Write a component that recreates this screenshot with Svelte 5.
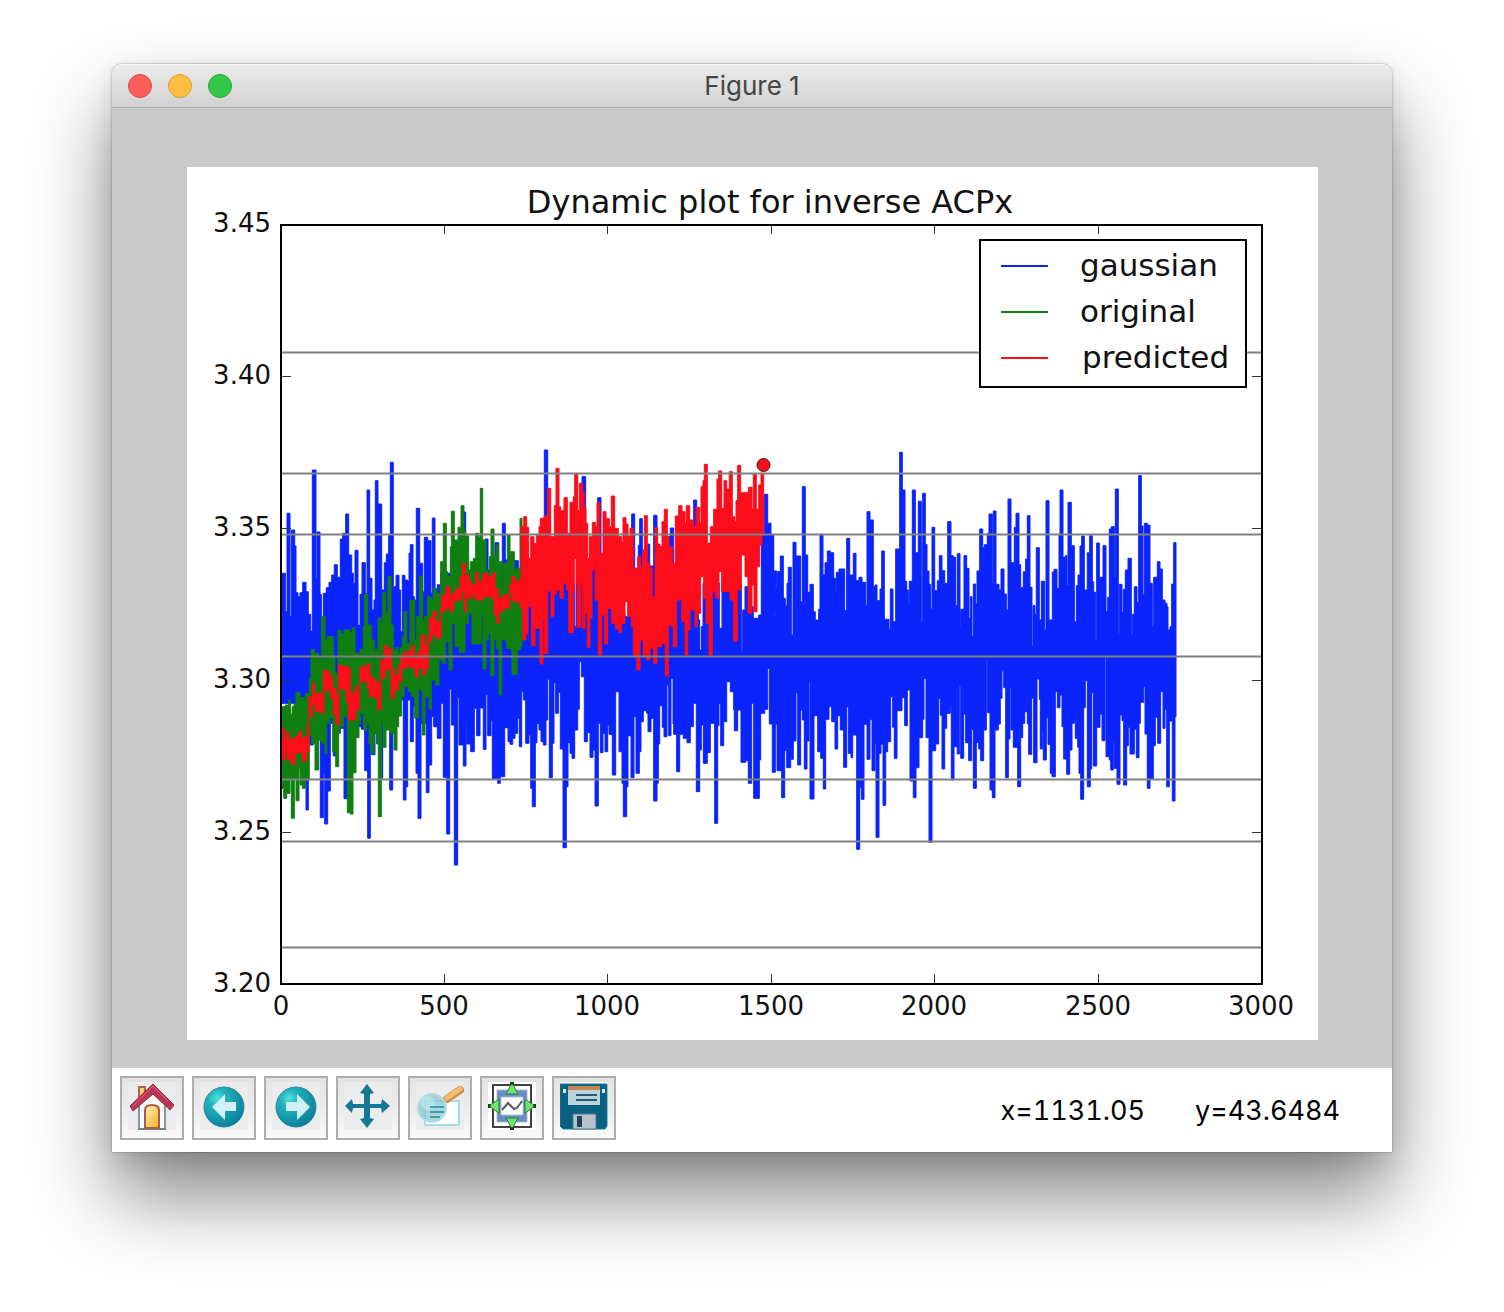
<script>
  const OX = 270;
  const OY = 440;

  // Envelope steps of each trace: "x y" pairs in thirds of a plot unit.
  // Every y holds until the next x; shift moves a section along the axis,
  // and spread widens its band by that many thirds.
  const sections = (...parts) =>
    parts.flatMap(([shift, text, spread = 0]) =>
      text.split(',').map((pair) => {
        const [x, y] = pair.trim().split(' ').map(Number);
        return [OX + (x + shift) / 3, OY + (y + spread) / 3];
      })
    );

  const stepped = (points) => points.map(([x, y]) => `H${x.toFixed(1)}V${y.toFixed(1)}`).join('');

  function area(top, bottom, endX) {
    const end = OX + endX / 3;
    const lower = bottom
      .map(([x, y], i) => {
        const next = i + 1 < bottom.length ? bottom[i + 1][0] : end;
        return `H${next.toFixed(1)}V${y.toFixed(1)}H${x.toFixed(1)}`;
      })
      .reverse()
      .join('');
    return `M${top[0][0]} ${top[0][1]}${stepped(top)}H${end}${lower}Z`;
  }

  const gaussian = area(
    sections(
      [0, '36 400,46 515,51 220,60 530,64 270,74 318,78 458,84 470,90 458,98 427,108 455,115 523,122 573,127 90,138 415,141 276,150 463,154 600,160 460,169 443,177 427,185 405,193 374,202 412,211 297,218 280,227 222,236 345,245 400,250 430,255 331,264 556,270 463,276 368,286 460,291 150,299 415,306 510,312 480,316 122,324 192,335 450,343 368,349 342,356 287,361 67,370 440,378 406,387 450,392 575,397 406,405 420,413 424,417 340,421 314,429 470,433 480,439 205,449 370,458 456,463 292,473 302,483 460,487 234,495 447,502 434,509 480,512 400,580 216,587 400,645 297,654 390,675 308,686 400,697 250,706 360,735 362,745 390'],
      [750, '0 400,73 30,83 450,130 430,163 560,168 430,186 110,197 430,200 480,215 390,233 173,243 350,255 480,263 505,300 305,306 520,315 530,330 400,335 222,344 385,355 316,359 236,367 380,381 312,389 378,401 226,411 440,443 290,451 264,461 400,495 250,500 400,521 180,530 300,535 540,539 630,544 560,549 430,566 310,573 430,598 565,606 430,630 430,664 635,668 510,675 440,688 500,700 535,716 525,724 285,733 163,743 250,751 285,760 520,766 440,770 393'],
      [1500, '0 250,3 285,11 523,17 430,22 395,31 348,40 475,46 498,51 430,55 382,64 585,69 307,78 348,92 485,97 140,106 345,113 457,120 433,130 515,136 540,146 508,150 283,159 405,165 368,172 333,181 338,191 415,197 455,199 397,207 387,224 512,230 295,239 405,250 340,258 422,267 412,276 427,287 497,291 215,300 240,310 440,315 435,321 482,330 447,335 333,343 538,357 568,361 447,369 545,377 327,389 37,397 150,405 424,410 450,415 488,418 424,427 150,436 338,445 184,454 545,458 160,466 313,471 393,477 433,482 507,486 262,494 452,502 422,508 347,516 392,524 430,533 245,543 347,550 352,557 497,562 341,570 560,572 508,582 347,590 385,597 535,601 470,606 590,610 432,617 492,621 393,629 267,638 323,643 314,652 280,657 222,667 430,670 213,678 433,687 450,693 387,702 462,709 510,714 177'],
      [2220, '3 368,13 262,18 220,27 374,32 443,40 395,47 357,52 227,60 442,66 618,69 497,75 523,79 323,88 540,94 424,104 570,108 182,117 540,127 396,132 388,141 445,147 285,150 150,159 352,166 347,171 437,174 187,184 317,193 545,199 437,204 405,210 318,215 288,223 450,232 338,239 287,247 425,251 457,257 603,260 309,268 412,279 317,288 515,293 472,298 267,304 260,313 410,316 147,325 580,328 433,336 517,340 448,346 390,354 355,364 585,367 523,373 440,381 487,386 107,394 258,399 465,403 250,412 255,420 430,427 560,431 412,442 365,450 387,457 480,465 490,471 500,474 570,480 560,485 432,491 308']
    ),
    sections(
      [0, '36 790,104 810,108 1110,115 900,120 915,130 880,151 1133,160 1000,164 1152,173 1053,181 850,190 948,197 870,211 865,222 1076,232 860,274 868,284 992,293 1195,301 900,305 944,315 880,320 912,329 860,335 1015,338 760,350 860,359 1050,368 880,374 780,400 1080,408 1040,413 780,421 905,430 800,438 1000,444 1135,453 850,469 1058,477 975,485 830,491 860,502 895,513 790,520 1012,530 1182,539 747,544 855,553 1275,563 773,567 915,580 978,588 850,590 912,602 935,613 805,620 887,630 804,640 928,648 763,653 887,663 842,667 1018,683 1030,691 1010,704 863,714 905,720 913,728 895,735 880,743 835,748 920'],
      [750, '5 755,10 780,17 910,27 885,32 1045,37 1100,46 908,51 850,57 870,63 905,70 915,78 840,83 718,88 1013,97 910,102 728,107 820,115 757,121 927,129 1223,139 1040,144 908,150 940,156 955,164 870,173 808,178 665,184 710,193 905,202 878,210 952,219 930,225 1098,235 850,241 938,249 880,255 935,263 855,267 883,277 1005,287 755,297 935,306 1030,310 1130,320 1040,324 887,333 1013,342 830,348 1000,358 935,363 845,370 812,380 820,384 875,393 835,401 1083,411 1030,415 912,419 797,427 862,432 890,441 735,446 887,453 715,459 852,461 883,470 995,479 883,490 895,501 908,511 860,520 790,529 1055,539 930,544 855,550 970,562 938,571 850,584 1150,593 857,597 790,602 917,611 845,620 725,631 755,641 810,643 872,653 810,663 967,677 962,685 1030,695 790,701 1075,718 960,722 820,734 808,743 685,748 852,757 997,766 852,771 990'],
      [1500, '21 992,35 1073,44 932,50 983,62 958,70 903,78 758,83 975,92 810,97 840,103 987,111 903,117 725,120 1077,132 827,143 935,152 955,160 1047,167 838,177 800,185 845,195 927,203 827,211 870,221 982,230 800,235 940,243 953,248 885,260 1228,269 1043,274 1078,282 853,291 958,300 838,306 992,315 910,318 1192,327 940,333 912,339 1096,347 935,353 905,362 770,368 862,373 955,381 812,396 773,404 857,412 750,420 1023,430 1073,438 983,447 893,458 838,462 715,468 893,477 1207,486 932,497 912,506 775,511 826,516 987,524 865,530 820,541 795,544 1020,552 920,562 942,568 738,572 955,581 822,587 908,596 962,605 868,610 1045,619 908,626 927,632 962,641 870,649 655,652 818,660 1050,667 1073,675 870,685 852,691 775,696 693,701 743,707 1013,715 897'],
      [2220, '0 742,3 870,10 922,23 1040,32 893,38 850,44 815,52 852,56 943,65 775,71 968,81 717,88 778,91 927,97 880,100 960,109 832,114 913,121 1000,126 1010,136 755,142 803,150 765,156 860,161 957,170 1003,179 930,186 850,193 842,196 895,203 922,207 1000,212 1078,221 803,226 722,232 1040,241 987,245 758,250 978,260 862,270 822,276 902,285 650,288 950,298 960,302 990,310 908,313 985,321 1033,330 825,336 842,341 1035,350 917,355 862,360 942,373 868,379 953,387 850,391 787,401 740,405 882,412 1045,420 1018,430 917,436 832,443 910,452 755,459 865,465 808,470 1040,478 843,487 1083,495 830']
    ),
    2718
  );

  const original = area(
    sections([0, '36 800,46 795,56 780,62 822,67 800,72 793,78 757,90 773,104 805,107 760,118 715,123 628,133 640,145 655,155 530,165 600,172 590,190 650,195 700,204 570,213 582,222 570,240 577,247 563,255 640,270 628,280 560,284 462,293 555,304 600,313 690,316 628,324 535,333 550,338 458,347 520,354 410,363 555,370 630,378 622,384 640,390 622,397 590,402 515,410 610,420 480,434 600,440 530,449 408,458 540,463 530,472 470,483 480,490 445,500 460,512 365,520 250,529 395,533 410,541 320,544 214,553 300,564 262,573 197,582 270,587 288,596 390,601 365,610 355,617 280,627 292,631 145,638 300,648 390,653 400,658 350,663 267,672 350,679 315,686 365,697 435,700 370,712 285,720 335,733 390,738 385,750 235']),
    sections([0, '36 1045,41 1075,50 1060,60 1020,64 1135,73 1015,78 1082,87 985,90 1035,97 1045,106 1020,118 885,125 910,135 990,146 900,151 905,160 912,165 940,170 850,178 835,188 935,197 980,206 880,211 860,220 830,232 1118,241 1122,249 998,258 893,267 850,272 820,281 870,290 850,297 912,303 940,312 880,320 910,325 1130,334 850,340 922,348 870,361 880,372 930,381 860,386 828,395 770,402 740,415 755,424 770,434 835,445 750,457 885,465 770,477 808,484 720,497 735,507 660,518 670,526 605,537 690,546 550,555 620,568 637,585 550,595 520,606 612,628 610,635 520,639 687,648 600,655 580,662 706,672 600,680 625,687 765,695 600,710 625,722 630,726 703,742 630,752 620']),
    756
  );

  const predicted = area(
    sections(
      [0, '36 870,43 903,50 882,57 910,64 900,75 895,85 880,95 900,103 895,112 860,117 775,127 735,134 765,160 695,170 700,180 715,188 750,197 770,205 680,215 685,225 683,233 690,241 765,255 745,262 770,270 685,285 690,290 677,300 715,310 725,320 735,332 665,342 622,352 650,357 630,365 690,372 710,385 680,393 650,403 640,415 640,423 622,432 650,445 640,453 590,463 620,472 595,478 540,487 520,497 550,510 510,515 470,527 445,540 470,550 460,560 450,570 415,577 375,586 410,597 430,605 440,617 403,625 430,638 405,652 415,665 403,675 450,685 480,697 470,718 440,725 415,735 430,745 425', -5],
      [750, '3 260,11 230,20 262,26 355,32 290,42 310,50 285,57 260,61 235,72 228,83 145,92 290,103 197,108 85,117 200,122 212,132 173,142 280,150 187,160 170,164 102,173 212,178 130,188 158,193 205,198 250,203 355,208 290,217 247,226 260,231 187,240 340,249 215,258 236,268 260,274 168,284 265,295 290,305 310,309 233,318 252,324 290,330 265,340 385,353 350,362 380,368 330,373 227,382 370,390 385,397 470,405 263,413 312,420 320,426 245,433 208,442 290,447 320,458 370,466 228,476 197,486 215,495 250,499 197,509 240,520 260,528 202,539 250,543 140,549 122,553 73,562 310,571 260,581 208,591 117,596 93,605 205,612 122,620 147,628 95,637 230,644 245,648 182,653 76,662 158,685 142,696 207,700 102,709 207,716 135,723 100']
    ),
    sections(
      [0, '36 955,45 935,52 955,64 968,75 935,90 930,97 958,110 930,117 825,127 790,137 810,155 815,162 750,172 745,182 770,190 820,198 850,207 740,220 745,228 780,235 835,257 805,268 720,280 720,292 740,298 765,315 770,323 805,333 710,345 685,355 680,363 770,373 745,385 720,395 680,410 675,425 680,435 705,445 680,459 700,468 680,475 600,485 580,497 590,513 510,525 500,540 510,550 480,560 475,575 450,583 510,590 470,605 460,615 475,640 465,665 470,672 520,680 545,687 510,700 500,718 450,725 480,740 480,750 500,758 595,768 575', 5],
      [750, '24 500,35 617,45 565,60 672,69 535,73 640,83 453,93 530,102 462,110 450,120 475,130 430,140 450,146 578,160 455,163 355,168 430,171 562,183 435,188 565,195 520,202 622,210 535,216 390,225 480,235 645,245 525,254 612,263 505,275 550,287 567,298 578,305 550,315 485,323 530,334 560,340 645,350 690,360 600,370 650,380 660,390 625,401 670,411 620,425 610,436 708,445 555,455 560,460 620,470 480,485 545,495 645,503 570,510 510,525 560,532 520,542 410,551 475,558 550,567 645,577 455,587 475,597 395,605 455,620 455,630 480,641 603,652 450,664 345,675 410,684 520,696 435,702 515,711 380,719 315,726 285']
    ),
    1481
  );

  const traces = [
    { name: 'gaussian', d: gaussian, x: 1080 },
    { name: 'original', d: original, x: 1080 },
    { name: 'predicted', d: predicted, x: 1082 }
  ];

  const bands = [352, 473, 534, 656, 779, 841, 947];
  const xTicks = [0, 500, 1000, 1500, 2000, 2500, 3000].map((label, i) => ({ label, x: Math.floor(281 + i * 163.4) }));
  const yTicks = ['3.45', '3.40', '3.35', '3.30', '3.25', '3.20'].map((label, i) => ({ label, y: Math.round(224 + i * 151.9) }));
</script>

<main class="desktop">
  <section class="window" aria-label="Figure 1">
    <header class="titlebar">
      <div class="lights">
        <button class="light close" aria-label="Close"></button>
        <button class="light minimise" aria-label="Minimise"></button>
        <button class="light zoom" aria-label="Zoom"></button>
      </div>
      <h1>Figure 1</h1>
    </header>

    <div class="canvas">
      <svg class="figure" viewBox="187 167 1131 873" role="img" aria-label="Dynamic plot for inverse ACPx">
        <rect x="187" y="167" width="1131" height="873" fill="#fff" />
        {#each traces as trace}
          <path class={trace.name} d={trace.d} />
        {/each}
        <g class="bands">
          {#each bands as y}
            <path d="M281 {y + 0.5}H1262" />
          {/each}
        </g>
        <circle class="marker" cx="763.5" cy="465" r="6.5" />
        <g class="ticks">
          {#each xTicks as tick}
            <path d="M{tick.x + 0.5} 224v10M{tick.x + 0.5} 984v-10" />
          {/each}
          {#each yTicks as tick}
            <path d="M281 {tick.y + 0.5}h10M1262 {tick.y + 0.5}h-10" />
          {/each}
        </g>
        <rect class="frame" x="281" y="225" width="981" height="759" />

        <text class="title" x="770" y="213" text-anchor="middle">Dynamic plot for inverse ACPx</text>
        {#each xTicks as tick}
          <text class="label" x={tick.x} y="1015" text-anchor="middle">{tick.label}</text>
        {/each}
        {#each yTicks as tick}
          <text class="label" x="271" y={tick.y + 8} text-anchor="end">{tick.label}</text>
        {/each}

        <rect class="legend" x="980" y="240" width="266" height="147" />
        {#each traces as trace, i}
          <path class="key {trace.name}" d="M1001 {266 + i * 46}h47" />
          <text class="entry" x={trace.x} y={276 + i * 46}>{trace.name}</text>
        {/each}
      </svg>
    </div>

    <footer class="toolbar">
      <button class="tool" aria-label="Home">
        <svg viewBox="0 0 48 48">
          <defs>
            <linearGradient id="door" x2="1" y2="1"><stop stop-color="#fff0bc" /><stop offset="1" stop-color="#f5ad25" /></linearGradient>
          </defs>
          <path fill="#ececec" d="M0 0h48v48H0z" />
          <path fill="#fbd06a" stroke="#a66a4b" stroke-width="2" d="M11 5h6v13h-6z" />
          <path fill="#f8f9fa" stroke="#839ba0" stroke-width="2" d="M11 21 25 9l12 12v26H11z" />
          <path stroke="#668487" stroke-width="2" d="M10 47h28" />
          <path fill="url(#door)" stroke="#aa5c47" stroke-width="2" d="M17 46V28q0-5 7-5t7 5v18z" />
          <path fill="#bd3551" stroke="#912b42" stroke-width="1" d="m25 2 21 21-4 5-17-16L5 29l-3-5z" />
          <path fill="none" stroke="#d6667b" stroke-width="1" d="m5 24 20-20 15 15" />
        </svg>
      </button>
      {#each ['Back', 'Forward'] as name}
        <button class="tool" aria-label={name}>
          <svg viewBox="0 0 48 48">
            <defs>
              <radialGradient id="ball-{name}" cx=".33" cy=".28" r=".8">
                <stop stop-color="#4fe0df" /><stop offset=".28" stop-color="#22b2bc" /><stop offset="1" stop-color="#087c98" />
              </radialGradient>
            </defs>
            <path fill="#ececec" d="M0 0h48v48H0z" />
            <circle cx="24" cy="25" r="20" fill="url(#ball-{name})" stroke="#3184a4" stroke-width="1" />
            {#if name === 'Back'}
              <path fill="#d1f0f4" d="M12 25 25 12v8h11v9H25v9z" />
            {:else}
              <path fill="#d1f0f4" d="M38 25 25 12v8H14v9h11v9z" />
            {/if}
          </svg>
        </button>
      {/each}
      <button class="tool" aria-label="Pan">
        <svg viewBox="0 0 48 48">
          <path fill="#ececec" d="M0 0h48v48H0z" />
          <path fill="#157994" d="m23 2 7 9-4 1v10h11l1-5 8 7-8 7-1-5H26v10l4 1-7 9-7-9 4-1V26H9l-1 5-7-7 7-7 1 5h11V12l-4-1z" />
        </svg>
      </button>
      <button class="tool" aria-label="Zoom to rectangle">
        <svg viewBox="0 0 48 48">
          <path fill="#ececec" d="M0 0h48v48H0z" />
          <path fill="#fdfefe" stroke="#a4dce3" stroke-width="2" d="M9 19h34v24H9z" />
          <path stroke="#cc8f51" stroke-width="8" stroke-linecap="round" d="m31 17 13-9" />
          <path stroke="#f7bd6e" stroke-width="5" stroke-linecap="round" d="m31 16 13-9" />
          <circle cx="16" cy="26" r="14" fill="#83c8d2" fill-opacity=".72" stroke="#b5dce1" stroke-width="2" />
          <circle cx="12" cy="21" r="7" fill="#c9edf0" fill-opacity=".5" />
          <path stroke="#439eac" stroke-width="2" d="M14 25h14M14 30h14M14 35h10" />
        </svg>
      </button>
      <button class="tool" aria-label="Configure subplots">
        <svg viewBox="0 0 48 48">
          <path fill="#fff" d="M0 0h48v48H0z" />
          <path fill="#fff" stroke="#3e4042" stroke-width="2" d="M5 3h38v42H5z" />
          <path fill="#668bc7" stroke="#a9b6ce" stroke-width="1" d="M9 8h30v32H9z" />
          <path fill="#fff" stroke="#b2bdcf" stroke-width="1" d="M13 15h22v18H13z" />
          <path fill="none" stroke="#585858" stroke-width="2" d="m14 28 6-7 6 6 3-1 5-7" />
          <path fill="#6fe66b" stroke="#287d31" stroke-width="1" d="m24 1 6 11H18zM24 47l6-11H18zM1 24l10-7v14zM47 24l-10-7v14z" />
          <path stroke="#173e1c" stroke-width="3" d="M22 1h4M22 47h4M1 22v4M47 22v4" />
        </svg>
      </button>
      <button class="tool" aria-label="Save">
        <svg viewBox="0 0 48 48">
          <path fill="#fff" d="M0 0h48v48H0z" />
          <path fill="#0a6080" stroke="#15799a" stroke-width="1" d="M1 2h46v42l-2 3H3l-3-3V2z" />
          <path fill="#bdd3dc" d="M8 4h32v19H8z" />
          <path fill="#ca854f" d="M8 4h32v4H8z" />
          <path stroke="#245c76" stroke-width="2" d="M16 13h21M16 18h21" />
          <path fill="#dcebef" d="M3 7h3v4H3zM42 7h3v4h-3z" />
          <path fill="#b7c3cb" stroke="#477c92" stroke-width="1" d="M13 32h23v15H13z" />
          <path fill="#233e61" d="M17 34h5v11h-5z" />
        </svg>
      </button>
      <output class="position"><span>x=1131.05</span><span>y=43.6484</span></output>
    </footer>
  </section>
</main>

<style>
  :global(body) {
    margin: 0;
    background: #fff;
  }
  .desktop {
    box-sizing: border-box;
    min-height: 100vh;
    padding: 64px 112px 160px;
    overflow: hidden;
    font-family: Inter, "Liberation Sans", sans-serif;
  }
  .window {
    border-radius: 10px 10px 0 0;
    background: #cacaca;
    box-shadow: 0 0 2px rgba(0, 0, 0, 0.5), 0 8px 24px rgba(0, 0, 0, 0.1), 0 44px 80px rgba(0, 0, 0, 0.48);
  }
  .titlebar {
    box-sizing: border-box;
    display: grid;
    grid-template-columns: 1fr auto 1fr;
    align-items: center;
    height: 44px;
    padding: 0 16px;
    border-bottom: 1px solid #adadad;
    border-radius: 10px 10px 0 0;
    background: linear-gradient(#ececec, #d2d2d2);
    box-shadow: inset 0 1px #f6f6f6;
  }
  .lights {
    display: flex;
    gap: 16px;
  }
  .light {
    width: 24px;
    height: 24px;
    padding: 0;
    border: 1px solid;
    border-radius: 50%;
  }
  .close {
    background: #fc605c;
    border-color: #df4744;
  }
  .minimise {
    background: #fdbd40;
    border-color: #dd9f33;
  }
  .zoom {
    background: #34c94a;
    border-color: #26a934;
  }
  h1 {
    margin: 0;
    font-size: 26px;
    font-weight: 400;
    line-height: 32px;
    color: #464646;
  }
  .canvas {
    padding: 59px 74px 28px 75px;
  }
  .figure {
    display: block;
    width: 100%;
    font-family: "DejaVu Sans", sans-serif;
  }
  .gaussian {
    fill: #0b24fb;
    stroke: #0b24fb;
  }
  .original {
    fill: #107f12;
    stroke: #107f12;
  }
  .predicted {
    fill: #fc0d1b;
    stroke: #fc0d1b;
  }
  path.gaussian,
  path.original,
  path.predicted {
    stroke-width: 1;
  }
  path.key {
    stroke-width: 2;
  }
  .bands {
    stroke: #808080;
    stroke-width: 2;
  }
  .marker {
    fill: #fc0d1b;
    stroke: #3b1214;
    stroke-width: 1;
  }
  .ticks {
    stroke: #333;
    stroke-width: 1;
  }
  .frame {
    fill: none;
    stroke: #000;
    stroke-width: 2;
  }
  .legend {
    fill: #fff;
    stroke: #000;
    stroke-width: 2;
  }
  .title {
    font-size: 32px;
    fill: #111;
  }
  .entry {
    font-size: 31px;
    fill: #111;
  }
  .label {
    font-size: 26px;
    fill: #111;
  }
  .toolbar {
    display: flex;
    flex-wrap: wrap;
    gap: 8px;
    padding: 8px 52px 12px 8px;
    background: #fff;
  }
  .tool {
    box-sizing: border-box;
    width: 64px;
    height: 64px;
    padding: 4px 6px 8px;
    border: 2px solid #adadad;
    border-radius: 0;
    background: linear-gradient(#e1e1e1, #f9f9f9);
  }
  .tool svg {
    display: block;
    width: 48px;
    height: 48px;
  }
  .position {
    display: flex;
    gap: 50px;
    align-items: center;
    margin-left: auto;
    padding-top: 6px;
    font-size: 27px;
    line-height: 32px;
    font-variant-numeric: tabular-nums;
    color: #000;
  }
</style>
